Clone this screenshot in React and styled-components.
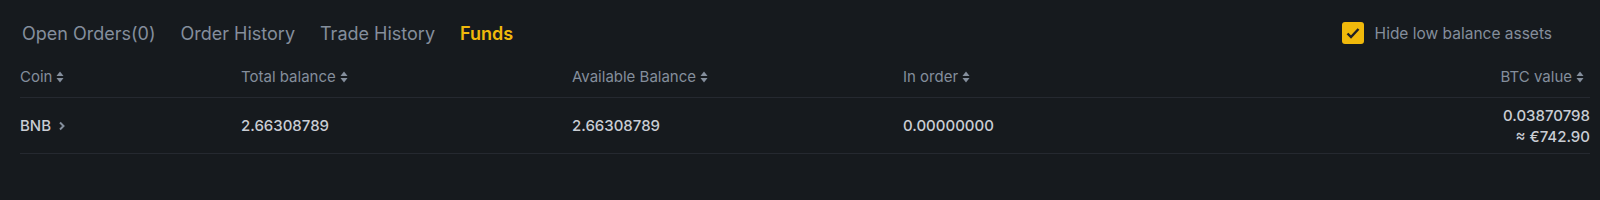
import React, { useState } from 'react';
import styled, { createGlobalStyle } from 'styled-components';

const GlobalStyle = createGlobalStyle`
  body {
    margin: 0;
    background: #161a1e;
    font-family: Inter, "Noto Sans", sans-serif;
  }
`;

const Page = styled.div`
  height: 200px;
  background: #161a1e;
  padding: 0 10px 0 20px;
  box-sizing: border-box;
`;

const TopBar = styled.div`
  display: flex;
  align-items: center;
  justify-content: space-between;
  height: 56px;
  padding-top: 10px;
  box-sizing: border-box;
`;

const Tabs = styled.div`
  display: flex;
  gap: 25px;
  padding-left: 2px;
`;

const Tab = styled.button`
  background: none;
  border: none;
  padding: 0;
  font-family: inherit;
  font-size: 18px;
  font-weight: ${(p) => (p.$active ? 600 : 400)};
  color: ${(p) => (p.$active ? '#f0b90b' : '#848e9c')};
  cursor: pointer;
`;

const HideToggle = styled.label`
  display: flex;
  align-items: center;
  gap: 11px;
  margin-right: 38px;
  font-size: 15.5px;
  color: #848e9c;
  cursor: pointer;
`;

const Box = styled.span`
  width: 22px;
  height: 22px;
  border-radius: 3px;
  background: ${(p) => (p.$checked ? '#f0b90b' : 'transparent')};
  border: ${(p) => (p.$checked ? 'none' : '1px solid #474d57')};
  display: flex;
  align-items: center;
  justify-content: center;
`;

const Row = styled.div`
  display: grid;
  grid-template-columns: 221px 331px 331px 1fr auto;
  align-items: center;
  height: ${(p) => p.$h}px;
  border-bottom: 1px solid #252930;
  font-size: 15px;
  font-weight: ${(p) => (p.$head ? 400 : 500)};
  color: ${(p) => (p.$head ? '#848e9c' : '#c9cdd4')};
`;

const HeadCell = styled.div`
  display: flex;
  align-items: center;
  gap: 4px;
  justify-content: ${(p) => (p.$right ? 'flex-end' : 'flex-start')};
  padding-right: ${(p) => (p.$right ? '6px' : '0')};
`;

const Cell = styled.div`
  display: flex;
  align-items: center;
  gap: 7px;
`;

const ValueCell = styled.div`
  text-align: right;
  line-height: 21px;
`;

const SortIcon = () => (
  <svg width="8" height="12" viewBox="0 0 8 12" fill="#848e9c">
    <path d="M4 0.5L7.5 5H0.5z" />
    <path d="M4 11.5L7.5 7H0.5z" />
  </svg>
);

const Chevron = () => (
  <svg width="8" height="10" viewBox="0 0 8 10" fill="none" stroke="#848e9c" strokeWidth="2">
    <path d="M2 1.5L5.5 5L2 8.5" />
  </svg>
);

const tabs = ['Open Orders(0)', 'Order History', 'Trade History', 'Funds'];

export default function App() {
  const [active, setActive] = useState('Funds');
  const [hide, setHide] = useState(true);

  return (
    <Page>
      <GlobalStyle />
      <TopBar>
        <Tabs>
          {tabs.map((t) => (
            <Tab key={t} $active={t === active} onClick={() => setActive(t)}>
              {t}
            </Tab>
          ))}
        </Tabs>
        <HideToggle onClick={() => setHide(!hide)}>
          <Box $checked={hide}>
            {hide && (
              <svg width="14" height="12" viewBox="0 0 14 12" fill="none" stroke="#1e2026" strokeWidth="2.4">
                <path d="M1.5 6.5L5 10L12.5 2" />
              </svg>
            )}
          </Box>
          Hide low balance assets
        </HideToggle>
      </TopBar>
      <Row $head $h={41}>
        <HeadCell>Coin <SortIcon /></HeadCell>
        <HeadCell>Total balance <SortIcon /></HeadCell>
        <HeadCell>Available Balance <SortIcon /></HeadCell>
        <HeadCell>In order <SortIcon /></HeadCell>
        <HeadCell $right>BTC value <SortIcon /></HeadCell>
      </Row>
      <Row $h={55}>
        <Cell>BNB <Chevron /></Cell>
        <Cell>2.66308789</Cell>
        <Cell>2.66308789</Cell>
        <Cell>0.00000000</Cell>
        <ValueCell>
          0.03870798
          <br />≈ €742.90
        </ValueCell>
      </Row>
    </Page>
  );
}
